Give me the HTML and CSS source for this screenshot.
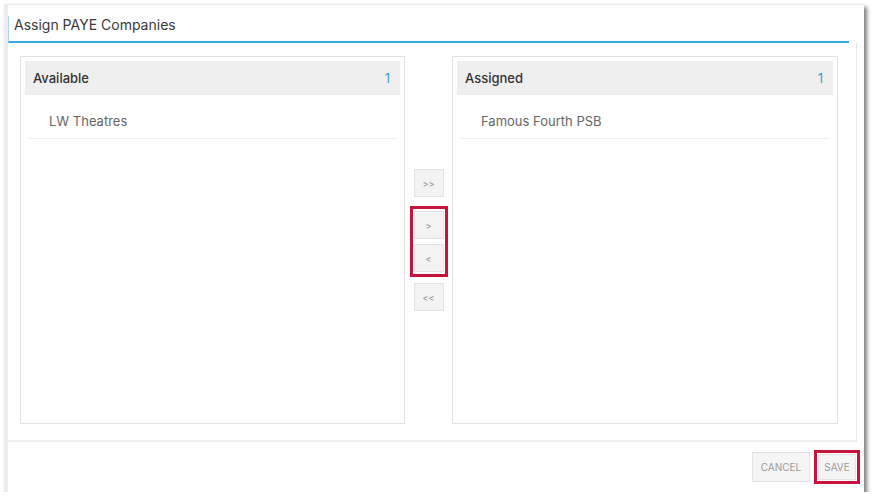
FILE: index.html
```html
<!DOCTYPE html>
<html lang="en">
<head>
    <meta charset="UTF-8">
    <meta name="viewport" content="width=device-width, initial-scale=1.0">
    <title>Assign PAYE Companies</title>
    <link rel="stylesheet" href="styles.css">
</head>
<body>
    <div class="dialog">
        <div class="dialog-title">Assign PAYE Companies</div>

        <div class="dialog-content">
            <!-- available list -->
            <div class="panel">
                <div class="panel-header">
                    <span>Available</span>
                    <span class="count">1</span>
                </div>
                <div class="panel-item">LW Theatres</div>
            </div>

            <!-- move buttons -->
            <div class="move-buttons">
                <button class="move-btn">&gt;&gt;</button>
                <div class="highlight group">
                    <button class="move-btn">&gt;</button>
                    <button class="move-btn">&lt;</button>
                </div>
                <button class="move-btn">&lt;&lt;</button>
            </div>

            <!-- assigned list -->
            <div class="panel panel-right">
                <div class="panel-header">
                    <span>Assigned</span>
                    <span class="count">1</span>
                </div>
                <div class="panel-item">Famous Fourth PSB</div>
            </div>
        </div>

        <div class="dialog-footer">
            <button class="footer-btn cancel">Cancel</button>
            <div class="highlight save-wrap">
                <button class="footer-btn save">Save</button>
            </div>
        </div>
    </div>
</body>
</html>
```

FILE: styles.css
```css
body {
    font-family: Inter, "Noto Sans", Arial, sans-serif;
    background-color: #ffffff;
    margin: 0;
    padding: 4px 0 0 4px;
}

.dialog {
    width: 856px;
    height: 487px;
    background-color: #ffffff;
    border-left: 4px solid #ececec;
    border-top: 1px solid #e8e8e8;
    box-shadow: 3px 3px 4px rgba(0, 0, 0, 0.5);
    display: flex;
    flex-direction: column;
}

.dialog-title {
    width: 835px;
    height: 24px;
    margin-top: 11px;
    padding: 1px 0 0 5px;
    border-left: 1px solid #a9dbf0;
    border-bottom: 2px solid #35a9dc;
    font-size: 14px;
    line-height: 16px;
    color: #3a3a3a;
}

.dialog-content {
    width: 823px;
    height: 368px;
    padding: 13px 13px 16px 12px;
    border-right: 1px solid #e6e6e6;
    border-bottom: 2px solid #ededed;
    display: flex;
}

.panel {
    width: 375px;
    padding: 4px;
    border: 1px solid #e2e2e2;
}

.panel-right {
    width: 376px;
}

.panel-header {
    height: 34px;
    padding: 0 10px 0 8px;
    background-color: #efefef;
    display: flex;
    justify-content: space-between;
    align-items: center;
    font-size: 13px;
    font-weight: 500;
    color: #333;
}

.count {
    color: #3d9bd6;
    font-weight: 400;
}

.panel-item {
    height: 25px;
    margin: 0 3px;
    padding: 18px 0 0 21px;
    border-bottom: 1px solid #eeeeee;
    font-size: 13px;
    line-height: 16px;
    color: #666;
}

.move-buttons {
    width: 47px;
    display: flex;
    flex-direction: column;
    align-items: center;
    justify-content: center;
}

.move-btn {
    width: 30px;
    height: 28px;
    padding: 0;
    background-color: #f3f3f3;
    border: 1px solid #e4e4e4;
    color: #8a8a8a;
    font-family: inherit;
    font-size: 9px;
}

.highlight {
    border: 3px solid #c8143c;
}

.group {
    margin: 9px 0 6px;
    padding: 2px 1px;
    display: flex;
    flex-direction: column;
    gap: 5px;
}

.dialog-footer {
    flex: 1;
    padding-right: 4px;
    display: flex;
    justify-content: flex-end;
    align-items: center;
    gap: 4px;
}

.footer-btn {
    padding: 0;
    background-color: #f5f5f5;
    border: 1px solid #e3e3e3;
    color: #9a9a9a;
    font-family: inherit;
    font-size: 10px;
    text-transform: uppercase;
}

.cancel {
    width: 58px;
    height: 30px;
}

.save-wrap {
    padding: 1px;
    display: flex;
}

.save {
    width: 38px;
    height: 26px;
}
```
